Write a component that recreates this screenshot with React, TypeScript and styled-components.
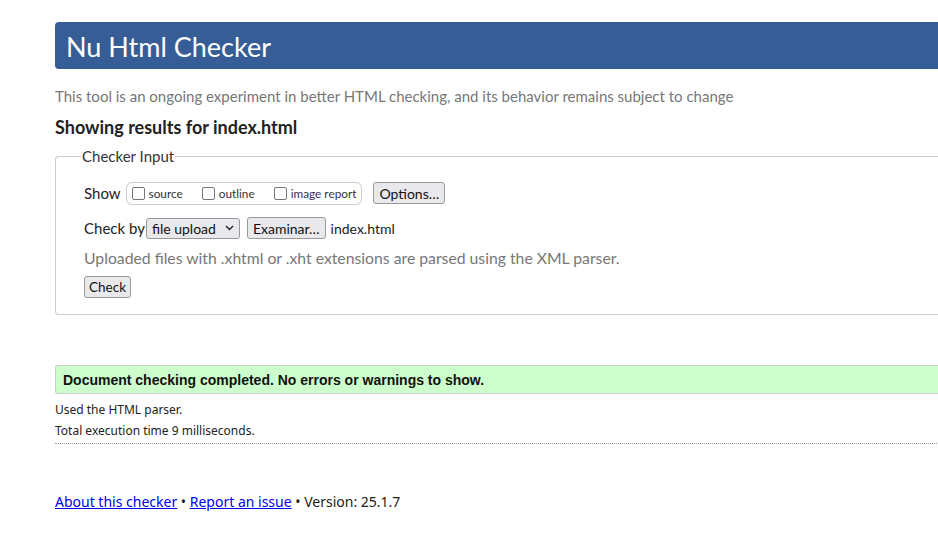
import React from "react";
import styled, { createGlobalStyle } from "styled-components";

const Global = createGlobalStyle`
  html, body { margin: 0; padding: 0; overflow: hidden; background: #fff; }
  body { font-family: Lato, "Noto Sans", sans-serif; color: #222; }
`;

const Page = styled.div`
  width: 1000px;
  padding: 22px 0 0 55px;
  display: flex;
  flex-direction: column;
`;

const Header = styled.h1`
  margin: 0;
  height: 47px;
  background: #365d95;
  border-radius: 4px 0 0 4px;
  color: #fff;
  font-family: Lato, sans-serif;
  font-weight: 400;
  font-size: 27px;
  line-height: 50px;
  padding-left: 11px;
`;

const Subtitle = styled.p`
  margin: 18px 0 0;
  font-size: 15px;
  line-height: 18px;
  color: #777;
`;

const Results = styled.h2`
  margin: 12px 0 0;
  font-size: 18px;
  line-height: 20px;
  font-weight: 700;
  color: #222;
`;

const Fieldset = styled.fieldset`
  margin: 10px 0 0;
  padding: 16px 0 15px 28px;
  border: 1px solid #ccc;
  border-right: none;
  border-radius: 4px 0 0 4px;
  min-width: 0;
`;

const Legend = styled.legend`
  margin-left: -3px;
  padding: 0 1px;
  font-size: 15px;
  color: #333;
`;

const Row = styled.div<{ $mt?: number }>`
  display: flex;
  align-items: center;
  height: 24px;
  font-size: 15px;
  color: #222;
  margin-top: ${(p) => p.$mt ?? 0}px;
`;

const Label = styled.span<{ $mr: number }>`
  margin-right: ${(p) => p.$mr}px;
`;

const CheckGroup = styled.div`
  display: flex;
  align-items: center;
  height: 23px;
  border: 1px solid #ccc;
  border-radius: 6px;
  padding: 0 5px 0 5px;
  gap: 19px;
  box-sizing: border-box;
`;

const CheckItem = styled.label`
  display: flex;
  align-items: center;
  gap: 4px;
  font-size: 11.8px;
  color: #333;
`;

const Box = styled.span`
  width: 13px;
  height: 13px;
  border: 1.5px solid #777;
  border-radius: 2px;
  background: #fff;
  box-sizing: border-box;
`;

const Button = styled.span<{ $ml?: number }>`
  display: inline-flex;
  align-items: center;
  height: 22px;
  padding: 0 5px;
  border: 1px solid #999;
  border-radius: 3px;
  background: #e9e9ed;
  font-size: 14px;
  color: #111;
  box-sizing: border-box;
  margin-left: ${(p) => p.$ml ?? 0}px;
`;

const SmallButton = styled(Button)`
  padding: 0 4px;
  font-size: 13.5px;
`;

const Select = styled.span`
  display: inline-flex;
  align-items: center;
  gap: 9px;
  height: 21px;
  padding: 0 5px 0 5px;
  border: 1px solid #999;
  border-radius: 3px;
  background: #e9e9ed;
  font-size: 14px;
  color: #111;
  box-sizing: border-box;
`;

const FileName = styled.span`
  margin-left: 5px;
  font-size: 14px;
`;

const Note = styled.p`
  margin: 9px 0 0;
  font-size: 15.75px;
  line-height: 18px;
  color: #777;
`;

const Success = styled.div`
  margin-top: 50px;
  height: 29px;
  box-sizing: border-box;
  border: 1px solid #ccc;
  border-right: none;
  border-radius: 3px 0 0 3px;
  background: #ccffcc;
  padding-left: 7px;
  display: flex;
  align-items: center;
  font-family: "Liberation Sans", Arial, sans-serif;
  font-weight: 700;
  font-size: 14px;
  color: #111;
`;

const Detail = styled.p<{ $mt: number }>`
  margin: ${(p) => p.$mt}px 0 0;
  font-family: "Noto Sans", sans-serif;
  font-size: 12px;
  line-height: 16px;
  color: #222;
`;

const Dotted = styled.div`
  margin-top: 4px;
  border-top: 1px dotted #999;
`;

const Footer = styled.p`
  margin: 49px 0 0;
  font-family: "Noto Sans", sans-serif;
  font-size: 14px;
  line-height: 18px;
  color: #222;
  a { color: #00e; text-decoration: underline; }
`;

function Chevron() {
  return (
    <svg width="9" height="6" viewBox="0 0 9 6">
      <path d="M1 1 L4.5 4.5 L8 1" fill="none" stroke="#222" strokeWidth="1.4" />
    </svg>
  );
}

export default function App() {
  return (
    <>
      <Global />
      <Page>
        <Header>Nu Html Checker</Header>
        <Subtitle>
          This tool is an ongoing experiment in better HTML checking, and its behavior remains subject to change
        </Subtitle>
        <Results>Showing results for index.html</Results>
        <Fieldset>
          <Legend>Checker Input</Legend>
          <Row>
            <Label $mr={5}>Show</Label>
            <CheckGroup>
              <CheckItem><Box />source</CheckItem>
              <CheckItem><Box />outline</CheckItem>
              <CheckItem><Box />image report</CheckItem>
            </CheckGroup>
            <Button $ml={11}>Options…</Button>
          </Row>
          <Row $mt={11}>
            <Label $mr={1}>Check by</Label>
            <Select>file upload <Chevron /></Select>
            <Button $ml={7}>Examinar…</Button>
            <FileName>index.html</FileName>
          </Row>
          <Note>Uploaded files with .xhtml or .xht extensions are parsed using the XML parser.</Note>
          <Row $mt={8}>
            <SmallButton>Check</SmallButton>
          </Row>
        </Fieldset>
        <Success>Document checking completed. No errors or warnings to show.</Success>
        <Detail $mt={8}>Used the HTML parser.</Detail>
        <Detail $mt={5}>Total execution time 9 milliseconds.</Detail>
        <Dotted />
        <Footer>
          <a href="#">About this checker</a> • <a href="#">Report an issue</a> • Version: 25.1.7
        </Footer>
      </Page>
    </>
  );
}
